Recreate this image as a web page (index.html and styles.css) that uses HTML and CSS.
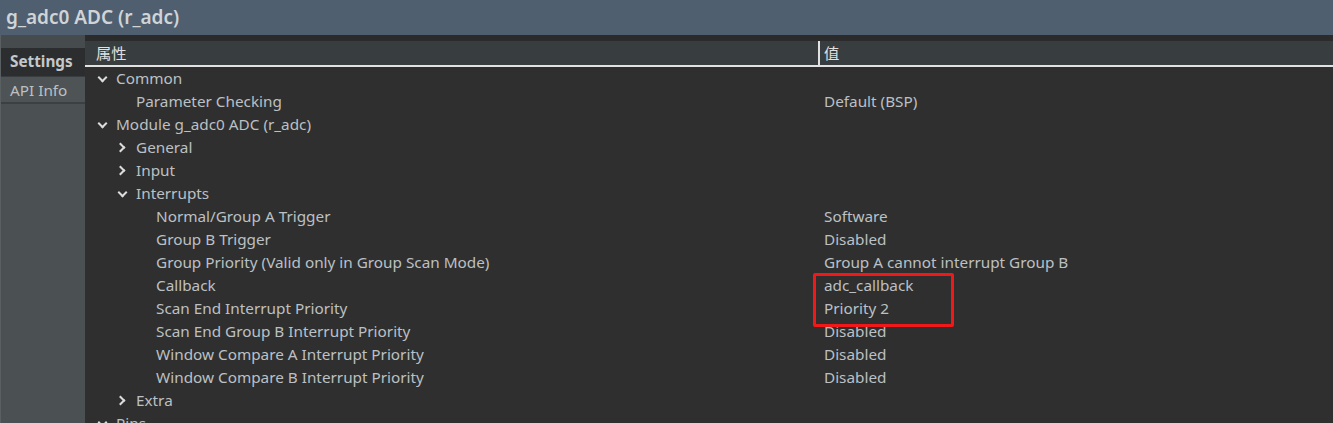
FILE: index.html
```html
<!DOCTYPE html>
<html lang="zh-CN">
<head>
  <meta charset="UTF-8">
  <title>g_adc0 ADC (r_adc)</title>
  <link rel="stylesheet" href="styles.css">
</head>
<body>
  <div class="title-bar">g_adc0 ADC (r_adc)</div>

  <div class="content">
    <!-- tabs on the left -->
    <div class="side">
      <div class="side-top"></div>
      <div class="tab active">Settings</div>
      <div class="tab">API Info</div>
    </div>

    <!-- property table -->
    <div class="main">
      <div class="strip"></div>
      <div class="head">
        <div class="col-name">属性</div>
        <div class="col-value">值</div>
      </div>

      <div class="rows">
        <div class="row"><div class="col-name lvl0"><span class="chev down"></span>Common</div><div class="col-value"></div></div>
        <div class="row"><div class="col-name lvl1 leaf">Parameter Checking</div><div class="col-value">Default (BSP)</div></div>
        <div class="row"><div class="col-name lvl0"><span class="chev down"></span>Module g_adc0 ADC (r_adc)</div><div class="col-value"></div></div>
        <div class="row"><div class="col-name lvl1"><span class="chev right"></span>General</div><div class="col-value"></div></div>
        <div class="row"><div class="col-name lvl1"><span class="chev right"></span>Input</div><div class="col-value"></div></div>
        <div class="row"><div class="col-name lvl1"><span class="chev down"></span>Interrupts</div><div class="col-value"></div></div>
        <div class="row"><div class="col-name lvl2 leaf">Normal/Group A Trigger</div><div class="col-value">Software</div></div>
        <div class="row"><div class="col-name lvl2 leaf">Group B Trigger</div><div class="col-value">Disabled</div></div>
        <div class="row"><div class="col-name lvl2 leaf">Group Priority (Valid only in Group Scan Mode)</div><div class="col-value">Group A cannot interrupt Group B</div></div>
        <div class="row"><div class="col-name lvl2 leaf">Callback</div><div class="col-value"><span class="mark">adc_callback</span></div></div>
        <div class="row"><div class="col-name lvl2 leaf">Scan End Interrupt Priority</div><div class="col-value">Priority 2</div></div>
        <div class="row"><div class="col-name lvl2 leaf">Scan End Group B Interrupt Priority</div><div class="col-value">Disabled</div></div>
        <div class="row"><div class="col-name lvl2 leaf">Window Compare A Interrupt Priority</div><div class="col-value">Disabled</div></div>
        <div class="row"><div class="col-name lvl2 leaf">Window Compare B Interrupt Priority</div><div class="col-value">Disabled</div></div>
        <div class="row"><div class="col-name lvl1"><span class="chev right"></span>Extra</div><div class="col-value"></div></div>
        <div class="row"><div class="col-name lvl0"><span class="chev down"></span>Pins</div><div class="col-value"></div></div>
      </div>
    </div>
  </div>
</body>
</html>
```

FILE: styles.css
```css
* {
  box-sizing: border-box;
}

html,
body {
  margin: 0;
  height: 100%;
  overflow: hidden;
}

body {
  font-family: "Noto Sans", "Noto Sans CJK SC", sans-serif;
  font-size: 15.3px;
  background: #2f2f2f;
  color: #bcc0c4;
}

.title-bar {
  height: 35px;
  background: #4f5f70;
  color: #d0d4d7;
  font-size: 19px;
  font-weight: 600;
  padding: 4px 0 0 6px;
  line-height: 26px;
}

.content {
  display: flex;
  height: calc(100% - 35px);
}

.side {
  width: 85px;
  flex-shrink: 0;
  background: #4b5053;
  border-left: 1px solid #5a5f62;
}

.side-top {
  height: 13px;
  background: #464b4e;
}

.tab {
  height: 27px;
  padding-left: 9px;
  line-height: 26px;
  color: #bcc0c3;
  background: #4e5356;
  border-bottom: 2px solid #3c4043;
}

.tab.active {
  height: 29px;
  font-weight: bold;
  color: #c4c8cb;
  background: #2c2d2e;
  border-bottom: 1px solid #3a3d40;
}

.main {
  flex: 1;
  min-width: 0;
}

.strip {
  height: 6px;
  background: #2b2b2b;
}

.head {
  display: flex;
  height: 26px;
  background: #383d40;
  border-bottom: 2px solid #e2e2e2;
  color: #e0e0e0;
}

.head .col-name {
  padding-left: 11px;
  line-height: 24px;
}

.head .col-value {
  border-left: 2px solid #e2e2e2;
  padding-left: 4px;
  line-height: 24px;
}

.col-name {
  width: 733px;
  flex-shrink: 0;
  white-space: nowrap;
}

.col-value {
  flex: 1;
  padding-left: 6px;
  white-space: nowrap;
}

.row {
  display: flex;
  height: 23px;
  line-height: 23px;
}

.lvl0 {
  padding-left: 11px;
}

.lvl1 {
  padding-left: 31px;
}

.lvl2 {
  padding-left: 51px;
}

.lvl1.leaf {
  padding-left: 51px;
}

.lvl2.leaf {
  padding-left: 71px;
}

.chev {
  display: inline-block;
  width: 20px;
  height: 23px;
  vertical-align: top;
  position: relative;
}

.chev::before {
  content: "";
  position: absolute;
  width: 5px;
  height: 5px;
  border-right: 2px solid #dcdcdc;
  border-bottom: 2px solid #dcdcdc;
}

.chev.down::before {
  left: 3px;
  top: 7px;
  transform: rotate(45deg);
}

.chev.right::before {
  left: 1px;
  top: 8px;
  transform: rotate(-45deg);
}

.mark {
  position: relative;
}

.mark::after {
  content: "";
  position: absolute;
  left: -11px;
  top: -2px;
  width: 135px;
  height: 48px;
  border: 3px solid #f01818;
  border-radius: 2px;
}
```
